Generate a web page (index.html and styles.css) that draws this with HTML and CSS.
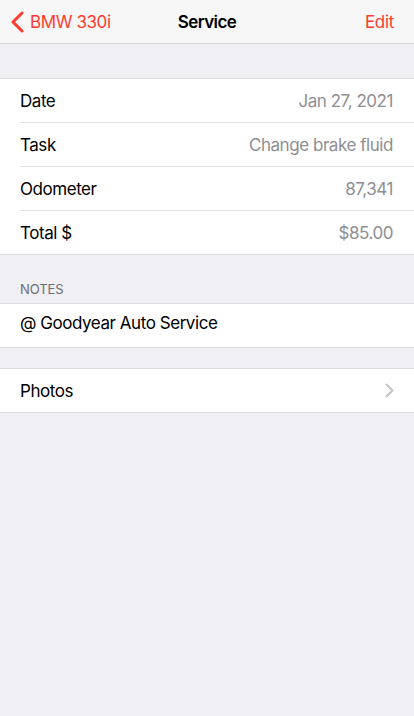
FILE: index.html
```html
<!DOCTYPE html>
<html>
<head>
<meta charset="utf-8">
<link rel="stylesheet" href="styles.css">
</head>
<body>
<header class="nav">
  <a class="back">
    <svg class="back-icon" width="13" height="22" viewBox="0 0 13 22"><path d="M11 2 L2 11 L11 20" fill="none" stroke="#ff3b30" stroke-width="3" stroke-linecap="round" stroke-linejoin="round"/></svg>
    <span>BMW 330i</span>
  </a>
  <div class="title">Service</div>
  <a class="edit">Edit</a>
</header>

<section class="group first">
  <div class="row"><span class="label">Date</span><span class="value">Jan 27, 2021</span></div>
  <div class="row"><span class="label">Task</span><span class="value">Change brake fluid</span></div>
  <div class="row"><span class="label">Odometer</span><span class="value">87,341</span></div>
  <div class="row"><span class="label">Total $</span><span class="value">$85.00</span></div>
</section>

<div class="section-header">NOTES</div>
<section class="group">
  <div class="row note"><span class="label">@ Goodyear Auto Service</span></div>
</section>

<section class="group photos">
  <div class="row"><span class="label">Photos</span>
    <svg class="chev" width="9" height="15" viewBox="0 0 9 15"><path d="M1.5 1.5 L7.5 7.5 L1.5 13.5" fill="none" stroke="#c4c4c7" stroke-width="2" stroke-linecap="round" stroke-linejoin="round"/></svg>
  </div>
</section>
</body>
</html>
```
FILE: styles.css
```css
html, body {
  margin: 0;
  padding: 0;
  background: #efeff4;
  font-family: Inter, "Noto Sans", sans-serif;
  -webkit-font-smoothing: antialiased;
  height: 100%;
}
.nav {
  height: 43px;
  background: #f7f7f7;
  border-bottom: 1px solid #d6d6d9;
  display: grid;
  grid-template-columns: 1fr auto 1fr;
  align-items: center;
  padding: 0 20px;
}
.back {
  display: flex;
  align-items: center;
  gap: 6px;
  margin-left: -9px;
  color: #ff3b30;
  font-size: 17px;
  letter-spacing: -0.4px;
}
.back-icon { margin-top: 1px; }
.title {
  font-size: 17px;
  font-weight: 600;
  color: #000;
  letter-spacing: -0.6px;
}
.edit {
  justify-self: end;
  color: #ff3b30;
  font-size: 17px;
  letter-spacing: -0.3px;
}
.group {
  background: #fff;
  border-top: 1px solid #dcdce0;
  border-bottom: 1px solid #dcdce0;
}
.group.first { margin-top: 34px; }
.row {
  height: 43px;
  margin-left: 20px;
  padding-right: 21px;
  display: flex;
  align-items: center;
  justify-content: space-between;
  border-bottom: 1px solid #e3e3e6;
  font-size: 17px;
  letter-spacing: -0.45px;
}
.row:last-child { border-bottom: none; height: 43px; }
.row.note { box-sizing: border-box; padding-bottom: 6px; }
.label { color: #000; }
.value { color: #8e8e93; }
.section-header {
  height: 48px;
  box-sizing: border-box;
  padding: 26px 20px 0;
  font-size: 13px;
  color: #6d6d72;
  letter-spacing: -0.1px;
}
.photos { margin-top: 20px; }
.chev { margin-right: -1px; }
```
